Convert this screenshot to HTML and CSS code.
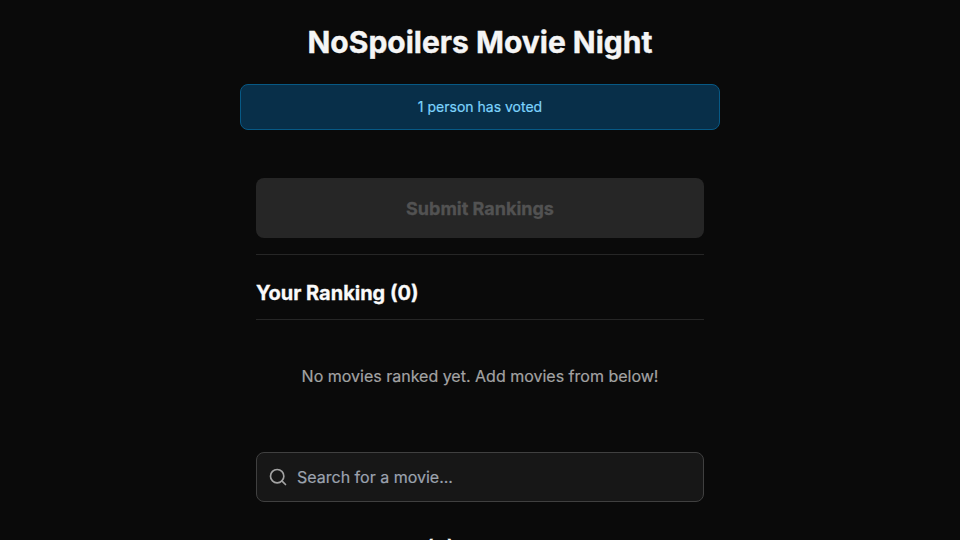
FILE: index.html
```html
<!DOCTYPE html>
<html lang="en">
<head>
<meta charset="utf-8">
<title>NoSpoilers Movie Night</title>
<link rel="stylesheet" href="styles.css">
</head>
<body>
<main class="page">
  <h1 class="title">NoSpoilers Movie Night</h1>
  <div class="notice">1 person has voted</div>
  <div class="content">
    <div class="submit-bar"><button class="submit" disabled>Submit Rankings</button></div>
    <h2 class="heading ranking-heading">Your Ranking (0)</h2>
    <p class="empty">No movies ranked yet. Add movies from below!</p>
    <label class="search">
      <svg class="search-icon" viewBox="0 0 24 24" fill="none" stroke="currentColor" stroke-width="2" stroke-linecap="round" stroke-linejoin="round"><circle cx="11" cy="11" r="8"/><path d="m21 21-4.35-4.35"/></svg>
      <input class="search-input" type="text" placeholder="Search for a movie...">
    </label>
    <h2 class="heading available-heading">Available Movies (0)</h2>
  </div>
</main>
</body>
</html>
```

FILE: styles.css
```css
* { box-sizing: border-box; }
html, body { height: 100%; }
body { margin: 0; overflow: hidden; background: #0a0a0a; color: #fafafa; font-family: Inter, sans-serif; font-size: 16px; line-height: 24px; }
h1, h2, p { margin: 0; }
.page { width: 480px; margin: 0 auto; padding-top: 24px; }
.title { color: #f5f5f5; font-size: 30px; line-height: 36px; font-weight: 700; text-align: center; white-space: nowrap; -webkit-text-stroke: 0.4px currentColor; }
.notice { margin-top: 24px; height: 46px; padding: 12px; border: 1px solid #075985; border-radius: 8px; background: #082f49; color: #7dd3fc; font-size: 14px; line-height: 20px; text-align: center; -webkit-text-stroke: 0.2px currentColor; }
.content { padding: 48px 16px 0; }
.submit-bar { padding-bottom: 16px; border-bottom: 1px solid #262626; }
.submit { display: block; width: 100%; height: 60px; padding: 2px 0 0; border: 0; border-radius: 8px; background: #262626; color: #525252; font: 700 18px/28px Inter, sans-serif; -webkit-text-stroke: 0.3px currentColor; }
.heading { font-size: 20px; line-height: 28px; font-weight: 700; }
.ranking-heading { padding: 24px 0 12px; border-bottom: 1px solid #262626; -webkit-text-stroke: 0.3px currentColor; }
.available-heading { -webkit-text-stroke: 0.04px currentColor; }
.empty { padding: 44px 0 64px; color: #a3a3a3; text-align: center; -webkit-text-stroke: 0.2px currentColor; }
.search { display: flex; align-items: center; gap: 9px; height: 50px; margin-bottom: 32px; padding: 0 11px; border: 1px solid #404040; border-radius: 8px; background: #171717; }
.search-icon { width: 20px; height: 20px; color: #a3a3a3; }
.search-input { flex: 1; min-width: 0; padding: 0; border: 0; outline: 0; background: transparent; color: #fff; font: 16px/24px Inter, sans-serif; -webkit-text-stroke: 0.2px #9ca3af; }
.search-input::placeholder { color: #9ca3af; opacity: 1; }
```
